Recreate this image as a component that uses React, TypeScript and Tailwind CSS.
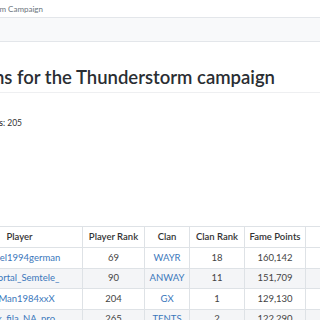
const rows = [
  { player: 'Marcel1994german', rank: '69', clan: 'WAYR', clanRank: '18', fame: '160,142', bonus: '' },
  { player: 'Immortal_Semtele_', rank: '90', clan: 'ANWAY', clanRank: '11', fame: '151,709', bonus: '' },
  { player: 'BatMan1984xxX', rank: '204', clan: 'GX', clanRank: '1', fame: '129,130', bonus: '' },
  { player: 'Jack_fila_NA_pro', rank: '265', clan: 'TENTS', clanRank: '2', fame: '122,290', bonus: '' },
];

function Clipped({ end, children, className }: { end: string; children: React.ReactNode; className: string }) {
  // shows only the tail of a line that runs off the left edge
  return (
    <div className={`flex justify-end whitespace-nowrap ${end} ${className}`}>
      <span className="shrink-0">{children}</span>
    </div>
  );
}

export default function App() {
  return (
    <div className="w-[320px] h-[320px] overflow-hidden bg-white text-[#212529] font-['Lato','Open_Sans',sans-serif]">
      {/* breadcrumb */}
      <div className="h-[17px] flex items-center">
        <Clipped end="w-[43px]" className="text-[8px] text-[#6c757d]">
          Clans / Thunderstorm Campaign
        </Clipped>
      </div>

      {/* sub nav band */}
      <div className="h-[25px] bg-[#f8f9fa] border-y border-[#e3e6ea]" />

      {/* heading */}
      <div className="h-[51px] border-b border-[#eeeff1] flex items-end pb-[3px]">
        <Clipped end="w-[275px]" className="text-[18.5px] font-semibold leading-[24px] text-[#2a2e33]">
          Player contributions for the Thunderstorm campaign
        </Clipped>
      </div>

      <div className="pt-[23px]">
        <Clipped end="w-[22px]" className="text-[8.5px] leading-[14px] text-[#333]">
          <span className="font-semibold">Total players</span>: 205
        </Clipped>
      </div>

      {/* table */}
      <div className="pt-[96px]">
        <table className="-ml-[44px] w-[430px] table-fixed border-collapse text-[9.5px]">
          <colgroup>
            <col className="w-[126px]" />
            <col className="w-[62px]" />
            <col className="w-[45px]" />
            <col className="w-[55px]" />
            <col className="w-[61px]" />
            <col className="w-[81px]" />
          </colgroup>
          <thead>
            <tr className="h-[21px]">
              {['Player', 'Player Rank', 'Clan', 'Clan Rank', 'Fame Points', 'Bonus'].map((h) => (
                <th key={h} className="border border-[#dee2e6] font-semibold text-center text-[#333] p-0 whitespace-nowrap">
                  {h}
                </th>
              ))}
            </tr>
          </thead>
          <tbody>
            {rows.map((r, i) => (
              <tr key={r.player} className={`h-[20.5px] ${i % 2 === 1 ? 'bg-[#f4f5f7]' : 'bg-white'}`}>
                <td className="border border-[#dee2e6] text-center text-[#3a77bb] p-0 whitespace-nowrap">{r.player}</td>
                <td className="border border-[#dee2e6] text-center text-[#444] p-0">{r.rank}</td>
                <td className="border border-[#dee2e6] text-center text-[#3a77bb] p-0">{r.clan}</td>
                <td className="border border-[#dee2e6] text-center text-[#444] p-0">{r.clanRank}</td>
                <td className="border border-[#dee2e6] text-center text-[#444] p-0">{r.fame}</td>
                <td className="border border-[#dee2e6] text-center text-[#444] p-0">{r.bonus}</td>
              </tr>
            ))}
          </tbody>
        </table>
      </div>
    </div>
  );
}
